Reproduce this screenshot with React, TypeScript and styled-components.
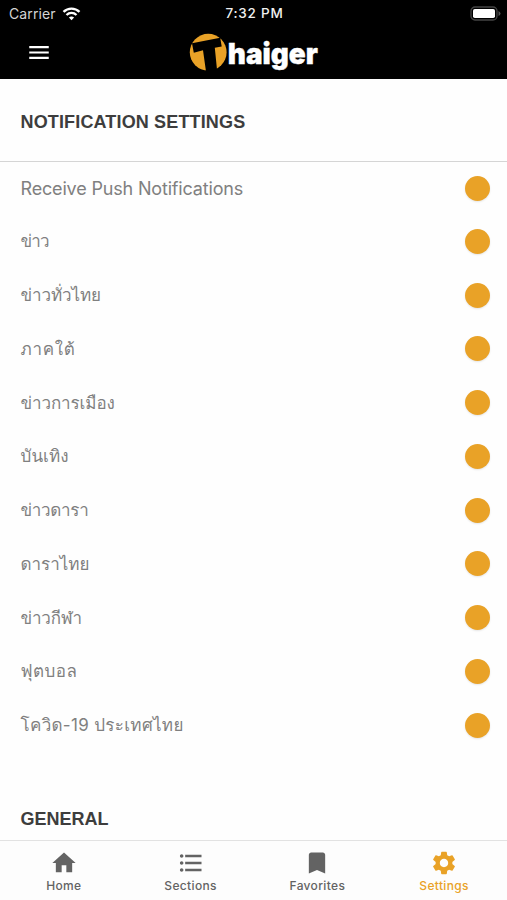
import React from "react";
import styled, { createGlobalStyle } from "styled-components";
import { MdHome, MdFormatListBulleted, MdBookmark, MdSettings, MdMenu } from "react-icons/md";

const GlobalStyle = createGlobalStyle`
  * { box-sizing: border-box; }
  body { margin: 0; background: #fff; overflow: hidden; }
`;

const Screen = styled.div`
  display: flex;
  flex-direction: column;
  height: 900px;
  background: #fefefe;
  font-family: Inter, Loma, sans-serif;
`;

const Header = styled.header`
  height: 79px;
  flex: none;
  background: #000;
  color: #fff;
`;

const StatusBar = styled.div`
  display: grid;
  grid-template-columns: 1fr auto 1fr;
  align-items: center;
  height: 27px;
  padding: 0 6px 0 9px;
  font-size: 13.5px;
  line-height: 27px;
`;

const Carrier = styled.div`
  display: flex;
  align-items: center;
  gap: 6px;
  color: #d4d4d4;
  font-size: 14px;
  letter-spacing: 0.1px;
`;

const Time = styled.div`
  margin-right: 1px;
  font-weight: 500;
  letter-spacing: 0.75px;
  color: #f0f0f0;
`;

const BatteryIcon = styled.svg`
  justify-self: end;
`;

const NavBar = styled.div`
  display: grid;
  grid-template-columns: 1fr auto 1fr;
  align-items: center;
  height: 50px;
  padding: 0 26px;
`;

const MenuButton = styled.button`
  display: flex;
  width: 26px;
  padding: 0;
  border: 0;
  background: none;
  color: #fff;
  font-size: 27px;
`;

const Main = styled.main`
  flex: 1;
  min-height: 0;
  overflow: hidden;
`;

const SectionTitle = styled.h2<{ $height: number; $ruled?: boolean }>`
  display: flex;
  align-items: center;
  height: ${(p) => p.$height}px;
  margin: 0;
  padding: ${(p) => (p.$ruled ? 5 : 3)}px 20.5px 0;
  border-bottom: ${(p) => (p.$ruled ? "1px solid #d5d5d5" : "0")};
  color: #3d3d3d;
  font: 700 18px "Liberation Sans", sans-serif;
  letter-spacing: ${(p) => (p.$ruled ? 0.15 : 0)}px;
`;

const Row = styled.label<{ $height: number }>`
  display: flex;
  align-items: center;
  justify-content: space-between;
  height: ${(p) => p.$height}px;
  padding: 0 17px 0 20.5px;
`;

const RowLabel = styled.span<{ $size: number; $spacing: number }>`
  color: #808080;
  font-size: ${(p) => p.$size}px;
  letter-spacing: ${(p) => p.$spacing}px;
  line-height: 28px;
  white-space: nowrap;
`;

const LeadLabel = styled(RowLabel)`
  padding-top: 2px;
`;

const Toggle = styled.span`
  width: 25px;
  height: 25px;
  border-radius: 50%;
  background: #e9a227;
  box-shadow: 0 1px 2px rgba(0, 0, 0, 0.1);
`;

const TabBar = styled.nav`
  display: grid;
  grid-template-columns: repeat(4, 1fr);
  flex: none;
  height: 60px;
  border-top: 1px solid #e2e2e2;
  background: #fdfdfd;
`;

const Tab = styled.a<{ $active?: boolean }>`
  display: flex;
  flex-direction: column;
  align-items: center;
  padding: 8px 0 0 1px;
  color: ${(p) => (p.$active ? "#e9a227" : "#636363")};
  font-size: 28px;
`;

const TabLabel = styled.span`
  margin-top: 1px;
  font-size: 12px;
  line-height: 16px;
  font-weight: 500;
  letter-spacing: 0.35px;
`;

const topics = [
  { label: "ข่าว", spacing: -0.8 },
  { label: "ข่าวทั่วไทย", spacing: -0.1 },
  { label: "ภาคใต้", spacing: 0.7 },
  { label: "ข่าวการเมือง", spacing: -0.1 },
  { label: "บันเทิง", spacing: 0.1 },
  { label: "ข่าวดารา", spacing: -0.3 },
  { label: "ดาราไทย", spacing: 0 },
  { label: "ข่าวกีฬา", spacing: -0.15 },
  { label: "ฟุตบอล", spacing: 0.5 },
  { label: "โควิด-19 ประเทศไทย", spacing: 0.32 },
];

const tabs = [
  { label: "Home", icon: <MdHome /> },
  { label: "Sections", icon: <MdFormatListBulleted /> },
  { label: "Favorites", icon: <MdBookmark /> },
  { label: "Settings", icon: <MdSettings />, active: true },
];

const Wifi = () => (
  <svg width="19" height="14" viewBox="0 0 18 14" fill="none" stroke="#fff" strokeWidth="2.3">
    <path d="M1 4.9C5.5 .4 12.5 .4 17 4.9" />
    <path d="M4 8C6.8 5.2 11.2 5.2 14 8" />
    <path d="M6.4 10.6C7.9 9.2 10.1 9.2 11.6 10.6L9 13.3Z" fill="#fff" stroke="none" />
  </svg>
);

const Battery = () => (
  <BatteryIcon width="31" height="15" viewBox="0 0 31 15">
    <rect x="1" y="1" width="26" height="13" rx="4" fill="none" stroke="#444" strokeWidth="1.3" />
    <rect x="3" y="3" width="22" height="9" rx="1.8" fill="#fff" />
    <path d="M28.5 5v5q2-1 2-2.5t-2-2.5Z" fill="#555" />
  </BatteryIcon>
);

const Logo = () => (
  <svg width="130" height="44" viewBox="189 30 130 44" role="img" aria-label="Thaiger">
    <circle cx="208.2" cy="52.2" r="18.4" fill="#e9a227" />
    <path d="M192 43.2L220.2 37.7L221.7 46.4L214.8 47.8L217.2 71.5L206 71.5L203 50.2L193.8 52.8Z" fill="#000" />
    <text
      x="227.8"
      y="63.5"
      fill="#fff"
      stroke="#fff"
      strokeWidth="0.4"
      fontFamily="Inter"
      fontWeight="900"
      fontSize="29"
      textLength="90"
      lengthAdjust="spacingAndGlyphs"
    >
      haiger
    </text>
  </svg>
);

export default function App() {
  return (
    <>
      <GlobalStyle />
      <Screen>
        <Header>
          <StatusBar>
            <Carrier>
              Carrier
              <Wifi />
            </Carrier>
            <Time>7:32 PM</Time>
            <Battery />
          </StatusBar>
          <NavBar>
            <MenuButton aria-label="Menu">
              <MdMenu />
            </MenuButton>
            <Logo />
          </NavBar>
        </Header>
        <Main>
          <SectionTitle $height={83} $ruled>
            NOTIFICATION SETTINGS
          </SectionTitle>
          <Row $height={52.5}>
            <LeadLabel $size={18} $spacing={-0.17}>
              Receive Push Notifications
            </LeadLabel>
            <Toggle />
          </Row>
          {topics.map((t) => (
            <Row key={t.label} $height={53.75}>
              <RowLabel $size={17} $spacing={t.spacing}>
                {t.label}
              </RowLabel>
              <Toggle />
            </Row>
          ))}
          <SectionTitle $height={131}>GENERAL</SectionTitle>
        </Main>
        <TabBar>
          {tabs.map((t) => (
            <Tab key={t.label} $active={t.active}>
              {t.icon}
              <TabLabel>{t.label}</TabLabel>
            </Tab>
          ))}
        </TabBar>
      </Screen>
    </>
  );
}
